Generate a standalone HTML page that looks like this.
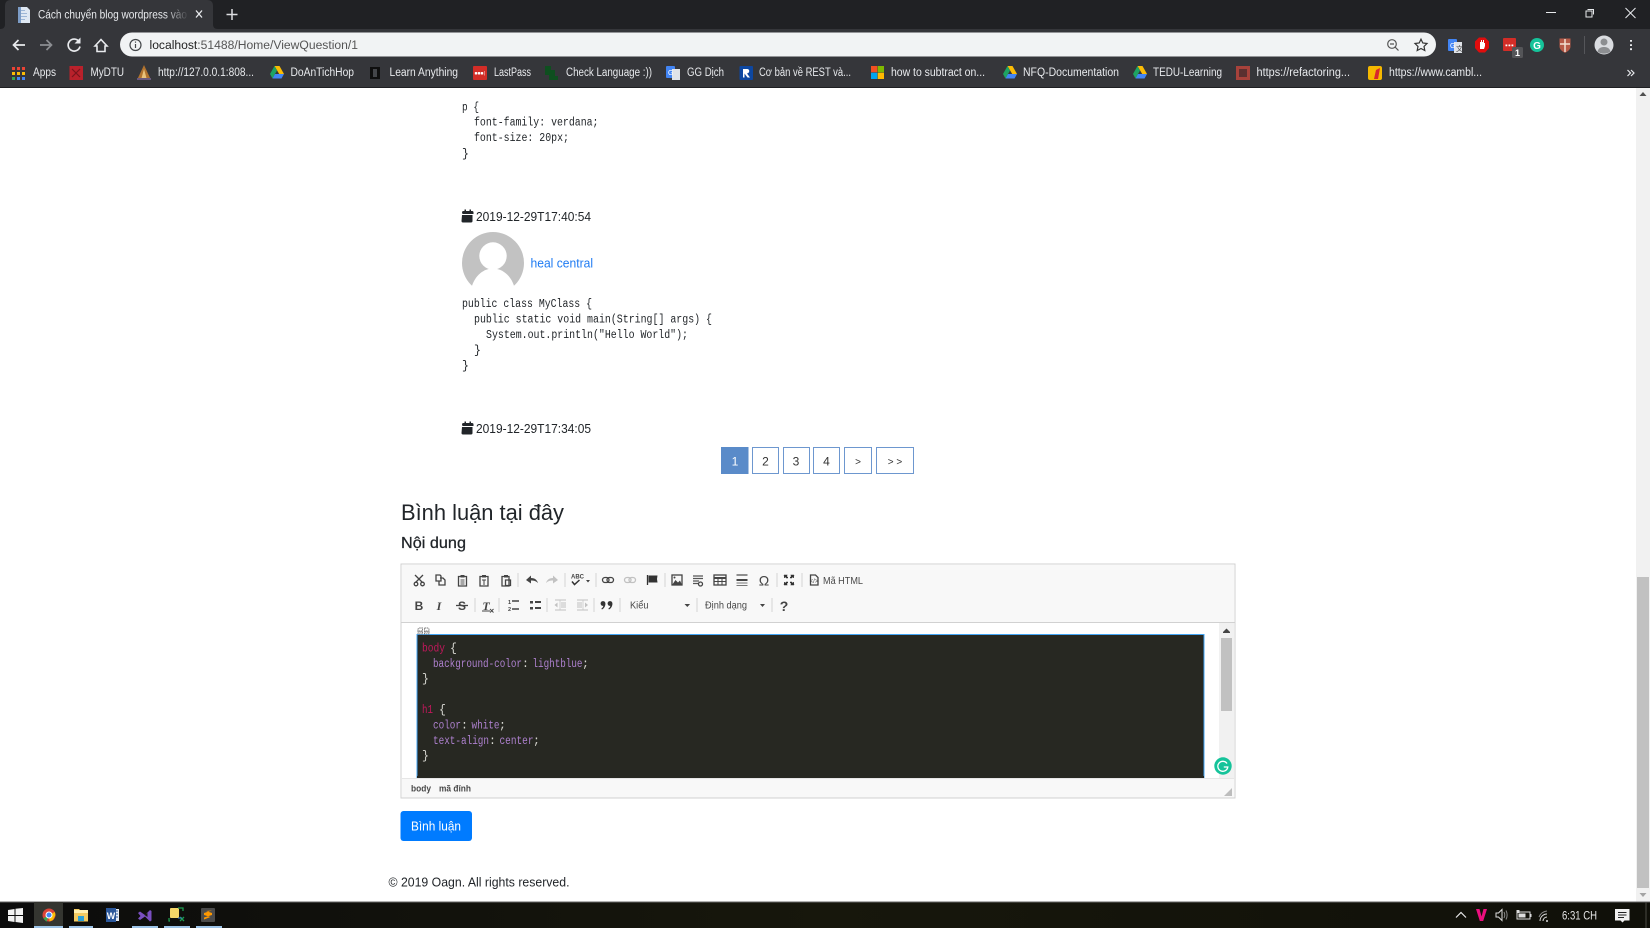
<!DOCTYPE html>
<html lang="vi"><head><meta charset="utf-8"><title>Cách chuyển blog wordpress vào</title>
<style>
html,body{margin:0;padding:0;width:1650px;height:928px;overflow:hidden;background:#fff}
svg{display:block}
text{font-family:"Liberation Sans","Noto Sans CJK SC",sans-serif}
.m{font-family:"Liberation Mono",monospace;font-size:11.5px}
.b{font-size:11.5px;fill:#e8eaed}
.ic{fill:none;stroke:#444;stroke-width:1.3}
.if{fill:#444;stroke:none}
.dis{opacity:.3}
.sep{stroke:#d4d4d4;stroke-width:1}
.pg{fill:#fff;stroke:#6d97cf;stroke-width:1}
.pt{font-size:12px;fill:#333;text-anchor:middle}
</style></head><body>
<svg width="1650" height="928" viewBox="0 0 1650 928" xmlns="http://www.w3.org/2000/svg">
<defs>
<linearGradient id="fade" x1="0" x2="1"><stop offset="0" stop-color="#35363a" stop-opacity="0"/><stop offset="1" stop-color="#35363a"/></linearGradient>
<linearGradient id="tb" x1="0" x2="1"><stop offset="0" stop-color="#0c0c0c"/><stop offset=".5" stop-color="#17170c"/><stop offset="1" stop-color="#101009"/></linearGradient>
<g id="drive"><path d="M4.5 0h5l4.5 8h-4.800z" fill="#fbbc04"/><path d="M4.500 0L0 8l2.500 4.500L7 4.500z" fill="#1ea362"/><path d="M2.500 12.500h9L14 8H5z" fill="#4285f4"/></g>
</defs>
<rect width="1650" height="928" fill="#fff"/>

<!-- browser chrome -->
<rect width="1650" height="29" fill="#202124"/>
<rect y="29" width="1650" height="59" fill="#35363a"/>
<rect y="87" width="1650" height="1" fill="#1e1f22"/>
<path d="M0 29c4 0 5-2 5-5V6c0-4 2-6 6-6h196c4 0 6 2 6 6v18c0 3 1 5 5 5z" fill="#35363a"/>
<path d="M18 7h9l3 3v13H18z" fill="#dfe8f3"/><path d="M20 10h5v1h-5zM20 13h7v1h-7zM20 16h7v1h-7zM20 19h5v1h-5z" fill="#9db6d6"/><path d="M18 7h3v16h-3z" fill="#7c9cc6"/>
<text x="38" y="18.500" font-size="11.500" fill="#e8eaed" textLength="149" lengthAdjust="spacingAndGlyphs">Cách chuyển blog wordpress vào</text>
<rect x="165" y="5" width="24" height="20" fill="url(#fade)"/>
<path d="M196 10.500l6 7M202 10.500l-6 7" stroke="#e8eaed" stroke-width="1.300"/>
<path d="M232 9v11M226.500 14.500h11" stroke="#dcdde0" stroke-width="1.500"/>
<path d="M1546 12.500h10" stroke="#e8eaed" stroke-width="1"/>
<path d="M1587.500 9.500h6v5M1586 11h6v6h-6z" fill="none" stroke="#e8eaed" stroke-width="1"/>
<path d="M1625.500 8l10 10M1635.500 8l-10 10" stroke="#e8eaed" stroke-width="1"/>

<path d="M25 45H14M18.500 40l-5 5 5 5" fill="none" stroke="#e8eaed" stroke-width="1.700"/>
<path d="M40 45h11M46.500 40l5 5-5 5" fill="none" stroke="#8c8e92" stroke-width="1.700"/>
<path d="M79 41.500a6 6 0 1 0 1 5" fill="none" stroke="#e8eaed" stroke-width="1.700"/><path d="M80.500 37.500v6h-6z" fill="#e8eaed"/>
<path d="M95 46l6-6.500 6 6.500h-2v5.500h-8V46z" fill="none" stroke="#e8eaed" stroke-width="1.600"/>

<rect x="120" y="32.500" width="1316" height="24" rx="12" fill="#f1f3f4"/>
<circle cx="135.500" cy="45" r="5.500" fill="none" stroke="#44474a" stroke-width="1.200"/><path d="M135.500 44v4M135.500 41.500v1.300" stroke="#44474a" stroke-width="1.200"/>
<text x="149.500" y="49" font-size="12.200" fill="#555" textLength="208.500" lengthAdjust="spacingAndGlyphs"><tspan fill="#222">localhost</tspan>:51488/Home/ViewQuestion/1</text>
<circle cx="1392" cy="44" r="4.300" fill="none" stroke="#555" stroke-width="1.200"/><path d="M1395 47l3.500 3.500M1390 44h4" stroke="#555" stroke-width="1.200"/>
<path d="M1421 39.200l1.800 3.800 4.200.5-3 2.900.8 4.100-3.800-2-3.800 2 .8-4.100-3-2.900 4.200-.5z" fill="none" stroke="#333" stroke-width="1.200"/>

<rect x="1448" y="39" width="9" height="12" rx="1" fill="#4285f4"/><rect x="1454" y="42" width="8" height="11" fill="#dfe3e8"/><text x="1450" y="48" font-size="7" fill="#fff">G</text><text x="1456" y="51" font-size="7" fill="#444">文</text>
<path d="M1479 37.500h6l4 4v6.500l-4 4.500h-6l-4-4.500v-6.500z" fill="#e00d0d"/><circle cx="1482" cy="45" r="4.500" fill="#e00d0d"/><path d="M1480 49v-7h1v-2h1v2h1v-2h1v3h1v3l-1 3z" fill="#fff"/>
<rect x="1503" y="38" width="13" height="13" rx="1" fill="#d32d27"/><path d="M1505.500 44.500h1.800v1.800h-1.800zM1508.500 44.500h1.800v1.800h-1.800zM1511.500 44.500h1.800v1.800h-1.800z" fill="#fff"/>
<rect x="1512" y="47" width="11" height="11" rx="1.500" fill="#545558"/><text x="1517.500" y="56" font-size="9" font-weight="bold" fill="#fff" text-anchor="middle">1</text>
<circle cx="1537" cy="45" r="7" fill="#15c39a"/><text x="1537" y="49" font-size="10" font-weight="bold" fill="#fff" text-anchor="middle">G</text>
<path d="M1559.500 38.500h11v8c0 3-3 5-5.500 6.500-2.500-1.500-5.500-3.500-5.500-6.500z" fill="#b65a48"/><path d="M1565 39v13M1560 44h10" stroke="#f2dfd3" stroke-width="1.500"/>
<rect x="1584" y="36" width="1" height="18" fill="#55565a"/>
<circle cx="1604" cy="45" r="9.500" fill="#dadce0"/><circle cx="1604" cy="42" r="3.500" fill="#8c8e91"/><path d="M1597.500 51.500c1-3.500 3.500-4.500 6.500-4.500s5.500 1 6.500 4.500c-3 2.800-10 2.800-13 0z" fill="#8c8e91"/>
<path d="M1631 40v1.800M1631 44.200V46M1631 48.300v1.800" stroke="#e8eaed" stroke-width="2"/>

<!-- bookmarks -->
<g><path d="M12 67h3v3h-3zM17 67h3v3h-3zM22 67h3v3h-3z" fill="#ea4335"/><path d="M12 72h3v3h-3zM17 72h3v3h-3zM22 72h3v3h-3z" fill="#fbbc04"/><path d="M12 77h3v3h-3z" fill="#34a853"/><path d="M17 77h3v3h-3zM22 77h3v3h-3z" fill="#4285f4"/></g>
<text class="b" x="33" y="76" textLength="23" lengthAdjust="spacingAndGlyphs">Apps</text>
<rect x="69.500" y="66" width="13.500" height="14" fill="#b9212b"/><path d="M72 69l8 8M80 69l-8 8" stroke="#7a141c" stroke-width="1.200"/>
<text class="b" x="90.500" y="76" textLength="33.500" lengthAdjust="spacingAndGlyphs">MyDTU</text>
<path d="M137 80l7-15 7 15z" fill="#b0722e"/><path d="M141 80l3-11 3 11z" fill="#e9c27a"/><path d="M137 78h14v2h-14z" fill="#6a5a7d"/>
<text class="b" x="158" y="76" textLength="96" lengthAdjust="spacingAndGlyphs">http://127.0.0.1:808...</text>
<use href="#drive" x="270" y="66"/>
<text class="b" x="290.500" y="76" textLength="63.500" lengthAdjust="spacingAndGlyphs">DoAnTichHop</text>
<rect x="370" y="67" width="10" height="12" fill="#0f0f0f"/><path d="M373 69h4v8h-4z" fill="#44464a"/>
<text class="b" x="389.500" y="76" textLength="68.500" lengthAdjust="spacingAndGlyphs">Learn Anything</text>
<rect x="473" y="66" width="14" height="14" rx="1" fill="#d32d27"/><path d="M475 72.300h2v2h-2zM478 72.300h2v2h-2zM481 72.300h2v2h-2zM484.300 71v4.500" fill="#fff" stroke="#fff" stroke-width=".4"/>
<text class="b" x="494" y="76" textLength="37" lengthAdjust="spacingAndGlyphs">LastPass</text>
<path d="M545 66h6v4h4v6h3v4h-9v-5h-4z" fill="#0e4f1f"/>
<text class="b" x="566" y="76" textLength="86" lengthAdjust="spacingAndGlyphs">Check Language :))</text>
<rect x="666" y="66" width="9" height="12" rx="1" fill="#4285f4"/><rect x="672" y="69" width="8" height="11" fill="#dfe3e8"/><text x="668" y="75" font-size="7" fill="#fff">G</text>
<text class="b" x="687" y="76" textLength="37" lengthAdjust="spacingAndGlyphs">GG Dịch</text>
<rect x="739.500" y="66" width="13.500" height="14" rx="1" fill="#0d47a1"/><path d="M743 69h4c3 0 3 4 0 4.500l3 4h-2.500l-3-4v4H743z" fill="#fff"/>
<text class="b" x="759" y="76" textLength="92" lengthAdjust="spacingAndGlyphs">Cơ bản về REST và...</text>
<path d="M871 66h6.300v6.300H871z" fill="#f25022"/><path d="M877.700 66h6.300v6.300h-6.300z" fill="#7fba00"/><path d="M871 72.700h6.300V79H871z" fill="#00a4ef"/><path d="M877.700 72.700h6.300V79h-6.300z" fill="#ffb900"/>
<text class="b" x="891" y="76" textLength="94" lengthAdjust="spacingAndGlyphs">how to subtract on...</text>
<use href="#drive" x="1003" y="66"/>
<text class="b" x="1023" y="76" textLength="96" lengthAdjust="spacingAndGlyphs">NFQ-Documentation</text>
<use href="#drive" x="1133" y="66"/>
<text class="b" x="1153" y="76" textLength="69" lengthAdjust="spacingAndGlyphs">TEDU-Learning</text>
<rect x="1236" y="66" width="14" height="14" fill="#a8423b"/><rect x="1239" y="69" width="8" height="8" fill="#5c3030"/>
<text class="b" x="1256.500" y="76" textLength="93.500" lengthAdjust="spacingAndGlyphs">https://refactoring...</text>
<rect x="1368" y="66" width="14" height="14" rx="2" fill="#f5b800"/><path d="M1374 79l2-9 4-2-2 11z" fill="#d8262c"/>
<text class="b" x="1389" y="76" textLength="93" lengthAdjust="spacingAndGlyphs">https://www.cambl...</text>
<path d="M1627.500 70l3 3-3 3M1631 70l3 3-3 3" fill="none" stroke="#e8eaed" stroke-width="1.200"/>

<!-- page scrollbar -->
<rect x="1636" y="88" width="14" height="814" fill="#f1f1f1"/>
<rect x="1637" y="577" width="12" height="311" fill="#c1c1c1"/>
<path d="M1643 92l-3.500 4h7z" fill="#505050"/><path d="M1643 897l-3.500-4h7z" fill="#a3a3a3"/>

<!-- answers -->
<g fill="#212529">
<text class="m" x="462" y="110.500" textLength="17" lengthAdjust="spacingAndGlyphs">p {</text>
<text class="m" x="474" y="125.500" textLength="124.500" lengthAdjust="spacingAndGlyphs">font-family: verdana;</text>
<text class="m" x="474" y="141" textLength="95" lengthAdjust="spacingAndGlyphs">font-size: 20px;</text>
<text class="m" x="462" y="157">}</text>
<text x="476" y="221" font-size="12.500" textLength="115" lengthAdjust="spacingAndGlyphs">2019-12-29T17:40:54</text>
<path d="M462 212.500c0-1 .5-1.500 1.500-1.500h1v-1.500h1.500V211h3.500v-1.500h1.500V211h1c1 0 1.500.5 1.500 1.500v1.500h-11zM462 215h10.500v6c0 1-.5 1.500-1.500 1.500h-8c-1 0-1.500-.5-1.500-1.500z"/>
<text class="m" x="462" y="307" textLength="130" lengthAdjust="spacingAndGlyphs">public class MyClass {</text>
<text class="m" x="474" y="322.500" textLength="238" lengthAdjust="spacingAndGlyphs">public static void main(String[] args) {</text>
<text class="m" x="486" y="338" textLength="202" lengthAdjust="spacingAndGlyphs">System.out.println("Hello World");</text>
<text class="m" x="474" y="353.500">}</text>
<text class="m" x="462" y="369">}</text>
<text x="476" y="433" font-size="12.500" textLength="115" lengthAdjust="spacingAndGlyphs">2019-12-29T17:34:05</text>
<path d="M462 424.500c0-1 .5-1.500 1.500-1.500h1v-1.500h1.500V423h3.500v-1.500h1.500V423h1c1 0 1.500.5 1.500 1.500v1.500h-11zM462 427h10.500v6c0 1-.5 1.500-1.500 1.500h-8c-1 0-1.500-.5-1.500-1.500z"/>
</g>
<circle cx="493" cy="263" r="31" fill="#c2c2c2"/>
<circle cx="493" cy="256" r="13.700" fill="#fff"/>
<path d="M471 290c2-12 11-21.500 22-21.500s20 9.500 22 21.500l-4 8h-36z" fill="#fff"/>
<rect x="462" y="289" width="62" height="8" fill="#fff"/>
<text x="530.500" y="267.500" font-size="12.500" fill="#1f7bf2" textLength="62.500" lengthAdjust="spacingAndGlyphs">heal central</text>

<!-- pagination -->
<rect x="721" y="447" width="27.500" height="27" fill="#5a8bc9"/>
<text class="pt" x="735" y="465.500" style="fill:#fff">1</text>
<rect class="pg" x="752.500" y="447.500" width="26" height="26"/><text class="pt" x="765.500" y="465.500">2</text>
<rect class="pg" x="783.500" y="447.500" width="26" height="26"/><text class="pt" x="796" y="465.500">3</text>
<rect class="pg" x="813.500" y="447.500" width="26" height="26"/><text class="pt" x="826.500" y="465.500">4</text>
<rect class="pg" x="844.500" y="447.500" width="27" height="26"/><text class="pt" x="858" y="465" style="font-size:10px">&gt;</text>
<rect class="pg" x="876.500" y="447.500" width="37" height="26"/><text class="pt" x="895" y="465" style="font-size:10px">&gt; &gt;</text>

<!-- comment form -->
<text x="401" y="520" font-size="22.500" fill="#212529" textLength="163" lengthAdjust="spacingAndGlyphs">Bình luận tại đây</text>
<text x="401" y="548" font-size="15.500" fill="#212529" stroke="#212529" stroke-width=".25" textLength="65" lengthAdjust="spacingAndGlyphs">Nội dung</text>

<!-- editor -->
<rect x="401" y="564" width="834" height="234" fill="#fff" stroke="#d1d1d1"/>
<rect x="402" y="565" width="832" height="57" fill="#f8f8f8"/>
<rect x="401" y="622" width="834" height="1" fill="#d1d1d1"/>
<rect x="1219" y="623" width="15" height="155" fill="#f1f1f1"/>
<rect x="1221" y="638" width="11" height="73" fill="#c1c1c1"/>
<path d="M1226.500 628.500l-3.500 3.500h7z" fill="#444"/><rect x="1223" y="632" width="7" height="1" fill="#444"/>
<rect x="417" y="634.500" width="787" height="143" fill="#272822" stroke="#42a5f5"/>
<rect x="417" y="776" width="787" height="2" fill="#272822"/>
<path d="M418 629.500c0-1 .5-1.500 1.500-1.500h3v3h-4.500zM424.500 628h3c1 0 1.500.5 1.500 1.500v1.500h-4.500zM418 632h4.500v2H418zM424.500 632h4.500v2h-4.500z" fill="none" stroke="#777" stroke-width=".9" stroke-dasharray="1.500 .6"/>
<g>
<text class="m" x="422" y="651.500" fill="#c2185b" textLength="23" lengthAdjust="spacingAndGlyphs">body</text><text class="m" x="450" y="651.500" fill="#d8d8d2">{</text>
<text class="m" x="433" y="667" fill="#ae81cf" textLength="89" lengthAdjust="spacingAndGlyphs">background-color</text><text class="m" x="522" y="667" fill="#d8d8d2">:</text><text class="m" x="532.500" y="667" fill="#ae81cf" textLength="50" lengthAdjust="spacingAndGlyphs">lightblue</text><text class="m" x="582" y="667" fill="#d8d8d2">;</text>
<text class="m" x="422" y="682" fill="#d8d8d2">}</text>
<text class="m" x="422" y="713" fill="#c2185b" textLength="11" lengthAdjust="spacingAndGlyphs">h1</text><text class="m" x="439" y="713" fill="#d8d8d2">{</text>
<text class="m" x="433" y="728.500" fill="#ae81cf" textLength="28" lengthAdjust="spacingAndGlyphs">color</text><text class="m" x="461" y="728.500" fill="#d8d8d2">:</text><text class="m" x="471.500" y="728.500" fill="#ae81cf" textLength="28" lengthAdjust="spacingAndGlyphs">white</text><text class="m" x="499" y="728.500" fill="#d8d8d2">;</text>
<text class="m" x="433" y="744" fill="#ae81cf" textLength="56" lengthAdjust="spacingAndGlyphs">text-align</text><text class="m" x="489" y="744" fill="#d8d8d2">:</text><text class="m" x="499.500" y="744" fill="#ae81cf" textLength="34" lengthAdjust="spacingAndGlyphs">center</text><text class="m" x="533" y="744" fill="#d8d8d2">;</text>
<text class="m" x="422" y="759" fill="#d8d8d2">}</text>
</g>
<circle cx="1223" cy="766" r="8.700" fill="#15c39a"/>
<path d="M1227 763.500a5 5 0 1 0 .8 3.500h-4" fill="none" stroke="#fff" stroke-width="1.300"/>
<rect x="402" y="778" width="832" height="19.500" fill="#f8f8f8"/>
<rect x="402" y="778" width="832" height="1" fill="#e6e6e6"/>
<text x="411" y="791.500" font-size="9" font-weight="bold" fill="#484848" textLength="20" lengthAdjust="spacingAndGlyphs">body</text>
<text x="439" y="791.500" font-size="9" font-weight="bold" fill="#484848" textLength="32" lengthAdjust="spacingAndGlyphs">mã đính</text>
<path d="M1232 788v8h-8z" fill="#bdbdbd"/>

<!-- toolbar row 1 -->
<g class="sep"><path d="M518 573v14M565 573v14M596 573v14M665 573v14M777 573v14M802 573v14"/><path d="M475 598v14M499 598v14M547 598v14M594 598v14M620 598v14M697 598v14M772 598v14"/></g>
<path d="M415 575l7.500 7.500M423 575l-7.500 7.500" class="ic" stroke-width="1.500"/><circle cx="416" cy="584" r="1.800" class="ic"/><circle cx="422.500" cy="584" r="1.800" class="ic"/>
<path d="M436 575h4l1 1v5h-5zM440 578h3l2 2v5h-6v-4" class="ic" stroke-width="1"/>
<path d="M458.500 576.500h8v9.500h-8z" class="ic"/><path d="M460.500 575h4v2.500h-4z" class="if"/><path d="M460.500 580h4M460.500 582h4M460.500 584h4" stroke="#555" stroke-width=".9"/>
<path d="M480 576.500h8v9.500h-8z" class="ic"/><path d="M482 575h4v2.500h-4z" class="if"/><path d="M482 580h4M484 580v5" stroke="#444" stroke-width="1"/>
<path d="M502 576.500h7v9.500h-7z" class="ic"/><path d="M504 575h4v2.500h-4z" class="if"/><path d="M505.500 580h5v5.500h-5z" class="ic" stroke-width=".9"/>
<path d="M526 580l5-4.500v2.500c4 0 6 2 7 5-2-2-4-2.500-7-2.500v3z" class="if"/>
<path d="M558 580l-5-4.500v2.500c-4 0-6 2-7 5 2-2 4-2.500 7-2.500v3z" class="if dis"/>
<text x="571" y="578.500" font-size="6" font-weight="bold" fill="#444">ABC</text><path d="M572 581.500l2.500 3 5-4.500" fill="none" stroke="#333" stroke-width="1.500"/><path d="M586 580l2 2.500 2-2.500z" fill="#444"/>
<rect x="602.500" y="577.500" width="6.500" height="5" rx="2.500" class="ic" stroke-width="1.300"/><rect x="607" y="577.500" width="6.500" height="5" rx="2.500" class="ic" stroke-width="1.300"/>
<g class="dis"><rect x="624.500" y="577.500" width="6.500" height="5" rx="2.500" class="ic" stroke-width="1.300"/><rect x="629" y="577.500" width="6.500" height="5" rx="2.500" class="ic" stroke-width="1.300"/></g>
<path d="M647.500 575v10" stroke="#333" stroke-width="1.300"/><path d="M648.500 575.500h9l-.5 3.500.5 3.500h-9z" fill="#333"/>
<rect x="672" y="575" width="10" height="10" class="ic" stroke-width="1.100"/><path d="M672 585l3.500-5 2.500 2.500 2-2 2 4.500z" class="if"/><circle cx="674.500" cy="577.500" r="1" class="if"/>
<path d="M693 576h10M693 578.500h10M693 581h6M693 583.500h6" stroke="#555" stroke-width="1.200"/><circle cx="700.500" cy="584" r="2" class="ic" stroke-width="1"/>
<rect x="714" y="575" width="12" height="10" class="ic" stroke-width="1.200"/><path d="M714 578h12" stroke="#444" stroke-width="2"/><path d="M718 578v7M722 578v7M714 581.500h12" stroke="#444" stroke-width="1"/>
<path d="M736.500 575h11" stroke="#555" stroke-width="1.300"/><path d="M736.500 580h11" stroke="#333" stroke-width="1.800"/><path d="M736.500 583h11M736.500 585.500h11" stroke="#777" stroke-width="1.100"/>
<text x="764" y="585.500" font-size="14" fill="#444" text-anchor="middle">Ω</text>
<path d="M784 575h3.500l-1 1 1.500 1.500-1 1-1.500-1.500-1 1zM794 575h-3.500l1 1-1.500 1.500 1 1 1.500-1.500 1 1zM784 585h3.500l-1-1 1.500-1.500-1-1-1.500 1.500-1-1zM794 585h-3.500l1-1-1.500-1.500 1-1 1.500 1.500 1-1z" fill="#333" stroke="#333" stroke-width=".5"/>
<path d="M810.500 575h5l2.500 2.500v7.500h-7.500z" class="ic" stroke-width="1"/><text x="814" y="583" font-size="6" fill="#444" text-anchor="middle">&lt;/&gt;</text>
<text x="823" y="584" font-size="10" fill="#484848" textLength="40" lengthAdjust="spacingAndGlyphs">Mã HTML</text>

<!-- toolbar row 2 -->
<g transform="translate(0,-1)">
<text x="419" y="611" font-size="12" font-weight="bold" fill="#444" text-anchor="middle">B</text>
<text x="439" y="611" font-size="12" font-weight="bold" font-style="italic" fill="#444" text-anchor="middle" style="font-family:'Liberation Serif',serif">I</text>
<text x="462" y="611" font-size="12" font-weight="bold" fill="#444" text-anchor="middle">S</text><path d="M456 606.500h12" stroke="#444" stroke-width="1.300"/>
<text x="486" y="611" font-size="12" font-weight="bold" font-style="italic" fill="#444" text-anchor="middle" style="font-family:'Liberation Serif',serif">T</text><path d="M482 612h8" stroke="#444" stroke-width="1"/><path d="M490 610l3.500 3.500M493.500 610l-3.500 3.500" stroke="#444" stroke-width=".9"/>
<path d="M512 602h7M512 610h7" stroke="#444" stroke-width="1.500"/><text x="508" y="605" font-size="5.500" font-weight="bold" fill="#444">1</text><text x="508" y="612" font-size="5.500" font-weight="bold" fill="#444">2</text>
<path d="M530 602h3v2.500h-3zM530 608h3v2.500h-3z" class="if"/><path d="M535 603h6M535 609h6" stroke="#444" stroke-width="2"/>
<g class="dis"><path d="M555 601h11M555 611h11M561 604h5M561 606h5M561 608h5" stroke="#444" stroke-width="1"/><path d="M554.500 606l3-2.500v5z" class="if"/><path d="M560 601v10" stroke="#444" stroke-width=".7"/></g>
<g class="dis"><path d="M577 601h11M577 611h11M577 604h5M577 606h5M577 608h5" stroke="#444" stroke-width="1"/><path d="M588 606l-3-2.500v5z" class="if"/><path d="M583 601v10" stroke="#444" stroke-width=".7"/></g>
<circle cx="603" cy="604.500" r="2.400" fill="#333"/><circle cx="610" cy="604.500" r="2.400" fill="#333"/><path d="M605.400 604.500c0 3-1.500 5-3.500 6l-.5-1c1.500-1 2-2 2-3.500zM612.400 604.500c0 3-1.500 5-3.500 6l-.5-1c1.500-1 2-2 2-3.500z" fill="#333"/>
<text x="630" y="609.500" font-size="10" fill="#484848" textLength="18.500" lengthAdjust="spacingAndGlyphs">Kiểu</text>
<path d="M684.500 605l2.800 3 2.800-3z" fill="#444"/>
<text x="705" y="609.500" font-size="10" fill="#484848" textLength="42" lengthAdjust="spacingAndGlyphs">Định dạng</text>
<path d="M760 605l2.500 3 2.500-3z" fill="#444"/>
<text x="784" y="612" font-size="14" font-weight="bold" fill="#444" text-anchor="middle">?</text>
</g>

<!-- submit -->
<rect x="400.500" y="811" width="71.500" height="30" rx="3" fill="#007bff"/>
<text x="436" y="830.500" font-size="12.500" fill="#fff" text-anchor="middle" textLength="50" lengthAdjust="spacingAndGlyphs">Bình luận</text>
<text x="388.500" y="886.500" font-size="12.500" fill="#212529" textLength="181" lengthAdjust="spacingAndGlyphs">© 2019 Oagn. All rights reserved.</text>

<!-- taskbar -->
<rect y="902" width="1650" height="26" fill="url(#tb)"/>
<rect y="901.500" width="1650" height="1" fill="#666"/>
<rect x="34" y="902" width="29" height="26" fill="#343530"/>
<path d="M8 910l6.500-1v6H8zM15.500 908.800L23 908v7h-7.500zM8 916h6.500v6L8 921zM15.500 916H23v7l-7.500-1z" fill="#f2f2f2"/>
<circle cx="49" cy="915" r="6.500" fill="#db4437"/><path d="M49 915l-5.600 3.200 3 3.500z" fill="#34a853"/><path d="M49 915l5.800-3 .7 3-2.500 5-3.500 1.500z" fill="#fbbc04"/><circle cx="49" cy="915" r="3" fill="#4285f4" stroke="#fff" stroke-width="1"/>
<path d="M74 909h5l1.500 1.500H88v11H74z" fill="#f2cb62"/><path d="M74 910h14v3H74z" fill="#fff0b0"/><path d="M78 916h6v5h-6z" fill="#2aa1d8"/>
<rect x="106" y="909" width="13" height="12" fill="#e6ecf5"/><rect x="106" y="908" width="10" height="14" fill="#2b579a"/><text x="111" y="919" font-size="9" font-weight="bold" fill="#fff" text-anchor="middle">W</text><path d="M116 911h2M116 914h2M116 917h2" stroke="#2b579a"/>
<path d="M138 913l2-1.500 5 3.500 5-5 1.500 1v9.500l-1.500 1-5-5-5 3.500-2-1.500 2.500-2.500z" fill="#7a4fc0"/><path d="M147.500 913v4l-3-2z" fill="#17170c"/>
<rect x="170" y="908" width="9" height="10" rx="1" fill="#f5d667"/><path d="M178 908h5v3M170 921h-1v-3M180 917l4 4M184 917l-4 4" stroke="#1c9a4f" stroke-width="1.300" fill="none"/><path d="M178 918h4" stroke="#3b82d6"/>
<rect x="201" y="908" width="14" height="14" rx="1" fill="#4b4b4b"/><path d="M212 910.500l-8 2.500v2l6.500 2-6.500 2.500v-2l8-2.500v-2l-6-2z" fill="#ff9800"/>
<g fill="#9dc4e8"><rect x="34" y="926" width="29" height="2"/><rect x="69" y="926" width="24" height="2"/><rect x="132" y="926" width="26" height="2"/><rect x="164" y="926" width="26" height="2"/><rect x="196" y="926" width="26" height="2"/></g>

<path d="M1456 917.500l5-5 5 5" fill="none" stroke="#e8e8e8" stroke-width="1.200"/>
<path d="M1476 909h3.500l2 7.500 2-7.500h3.500l-3.800 12h-3.400z" fill="#ec0f7e"/>
<path d="M1496 913h2.500l3.500-3.500v11l-3.500-3.500H1496z" fill="none" stroke="#ddd"/><path d="M1504 912c1 2 1 4 0 6M1506 910.500c1.500 3 1.500 6 0 9" fill="none" stroke="#888"/>
<rect x="1517" y="912" width="13" height="7" fill="none" stroke="#ddd"/><rect x="1518.500" y="913.500" width="7" height="4" fill="#ddd"/><path d="M1530 914h1.500v3H1530zM1516.500 910h3v3h-3z" fill="#ddd"/>
<circle cx="1547" cy="921" r="1" fill="#ddd"/><path d="M1540 921a7 7 0 0 1 7-7M1543 921a4 4 0 0 1 4-4" fill="none" stroke="#ddd"/><path d="M1539 917a10 10 0 0 1 8-6" fill="none" stroke="#888"/>
<text x="1562" y="919.500" font-size="11.500" fill="#e6e6e6" textLength="35" lengthAdjust="spacingAndGlyphs">6:31 CH</text>
<path d="M1615 909h14.500v11.500h-5l-2 2-2-2H1615z" fill="#f0f0f0"/><path d="M1618 912.500h8.500M1618 915h8.500M1618 917.500h6" stroke="#222"/>
<rect x="1645.500" y="902" width="1" height="26" fill="#4a4a44"/>
</svg>
</body></html>
